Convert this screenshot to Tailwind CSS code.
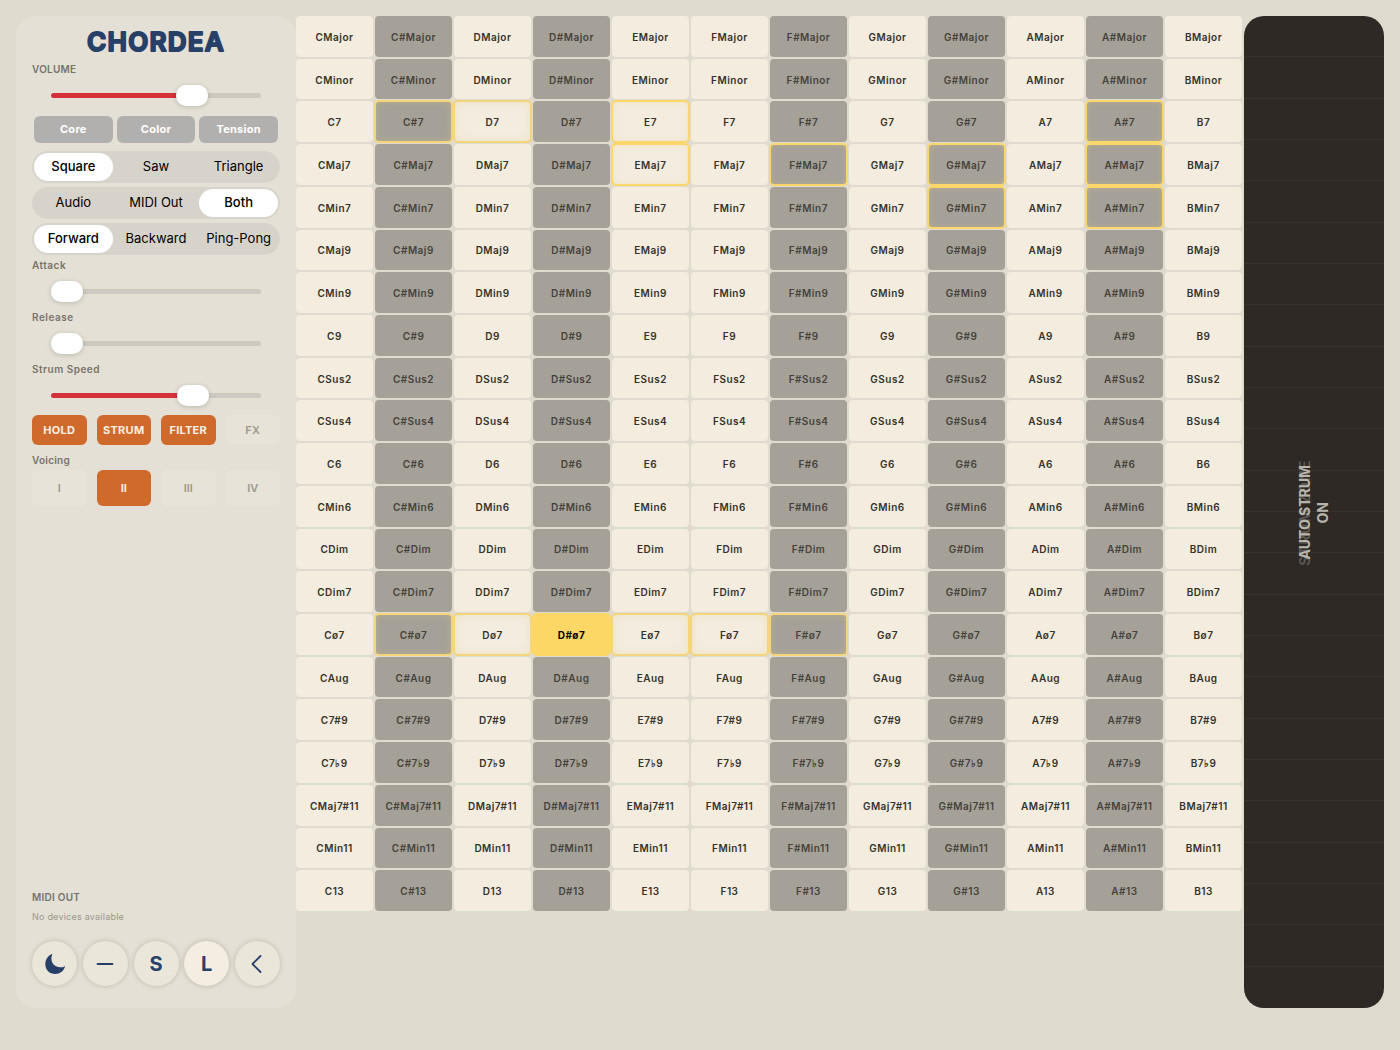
<!DOCTYPE html>
<html lang="en">
<head>
<meta charset="utf-8">
<meta name="viewport" content="width=device-width, initial-scale=1">
<title>Chordea</title>
<script src="https://cdn.jsdelivr.net/npm/@tailwindcss/browser@4"></script>
</head>
<body class="h-screen bg-[#dfdbcf] font-['Inter',sans-serif] text-[#35322b]">
<div class="flex h-full px-4 pt-4 pb-[42px]">

  <aside class="flex w-[280px] shrink-0 flex-col rounded-[20px] bg-[#e4e0d5] px-4 pt-2 pb-[22px]">
    <h1 class="flex h-9 justify-center">
      <svg class="h-9 w-full overflow-visible" role="img" aria-label="Chordea"><text x="50%" y="27" text-anchor="middle" class="fill-[#274068] stroke-[#274068] stroke-[2px] text-[26px] font-semibold tracking-wider [stroke-linejoin:round]">CHORDEA</text></svg>
    </h1>

    <label for="volume" class="mt-px h-4 text-[10px] leading-4 font-semibold tracking-wide text-[#77736b]">VOLUME</label>
    <div class="flex h-9 items-center px-[19px]"><input id="volume" type="range" value="70" style="--v:70%" class="slider"></div>

    <div class="mt-[3px] grid grid-cols-3 gap-1 px-0.5">
      <button class="h-[27px] rounded-md bg-[#b2b0ae] text-[11px] font-bold tracking-wide text-white">Core</button>
      <button class="h-[27px] rounded-md bg-[#b2b0ae] text-[11px] font-bold tracking-wide text-white">Color</button>
      <button class="h-[27px] rounded-md bg-[#b2b0ae] text-[11px] font-bold tracking-wide text-white">Tension</button>
    </div>

    <div id="segments" class="mt-2 flex flex-col gap-1"></div>

    <label for="attack" class="mt-0.5 h-4 text-[10px] leading-4 font-semibold tracking-wider text-[#77736b]">Attack</label>
    <div class="flex h-9 items-center px-[19px]"><input id="attack" type="range" value="0" style="--v:0%" class="slider"></div>
    <label for="release" class="h-4 text-[10px] leading-4 font-semibold tracking-wider text-[#77736b]">Release</label>
    <div class="flex h-9 items-center px-[19px]"><input id="release" type="range" value="0" style="--v:0%" class="slider"></div>
    <label for="speed" class="h-4 text-[10px] leading-4 font-semibold tracking-wider text-[#77736b]">Strum Speed</label>
    <div class="flex h-9 items-center px-[19px]"><input id="speed" type="range" value="71" style="--v:71%" class="slider"></div>

    <div class="mt-0.5 grid grid-cols-4 gap-2.5">
      <button class="h-[30px] rounded-md bg-[#d06a2c] text-[11px] font-bold tracking-wide text-[#f8f0e4]">HOLD</button>
      <button class="h-[30px] rounded-md bg-[#d06a2c] text-[11px] font-bold tracking-wide text-[#f8f0e4]">STRUM</button>
      <button class="h-[30px] rounded-md bg-[#d06a2c] text-[11px] font-bold tracking-wide text-[#f8f0e4]">FILTER</button>
      <button class="h-[30px] rounded-md bg-[#e7e3d8] text-[11px] font-semibold tracking-wide text-[#9c988e]">FX</button>
    </div>

    <h2 class="mt-[7px] h-4 text-[10px] leading-4 font-semibold tracking-wide text-[#77736b]">Voicing</h2>
    <div class="mt-0.5 grid grid-cols-4 gap-2.5">
      <button class="h-9 rounded-md bg-[#e7e3d8] text-[11px] font-semibold text-[#9c988e]">I</button>
      <button class="h-9 rounded-md bg-[#d06a2c] text-[11px] font-bold text-[#f8f0e4]">II</button>
      <button class="h-9 rounded-md bg-[#e7e3d8] text-[11px] font-semibold text-[#9c988e]">III</button>
      <button class="h-9 rounded-md bg-[#e7e3d8] text-[11px] font-semibold text-[#9c988e]">IV</button>
    </div>

    <h2 class="mt-auto h-4 text-[10px] leading-4 font-semibold tracking-wide text-[#77736b]">MIDI OUT</h2>
    <p class="mt-1 h-4 text-[9px] leading-4 tracking-wide text-[#9b978d]">No devices available</p>

    <div class="mt-4 flex justify-between text-xl font-bold text-[#274068]">
      <button aria-label="Dark mode" class="flex size-[45px] items-center justify-center rounded-full bg-[#ebe6da] shadow-[0_0_5px_rgba(60,50,30,0.22)]">
        <svg class="size-5" viewBox="0 0 20 20" fill="currentColor"><path d="M7.3.3C6.700 1.600 6.400 3 6.400 4.500c0 5.200 3.700 8.700 8.900 8.700 1.500 0 3-.2 4.200-.8.3-.1.600.1.500.4C18.600 17.100 14.900 20 10.200 20 4.500 20 .3 15.800.3 10.200.3 5.500 3.100 1.600 6.900 0c.3-.1.500.1.400.3z"/></svg>
      </button>
      <button aria-label="Remove" class="flex size-[45px] items-center justify-center rounded-full bg-[#ebe6da] shadow-[0_0_5px_rgba(60,50,30,0.22)]">
        <svg class="size-5" viewBox="0 0 20 20" fill="none" stroke="currentColor" stroke-width="1.800" stroke-linecap="round"><path d="M2.500 10h15"/></svg>
      </button>
      <button class="size-[45px] rounded-full bg-[#ebe6da] shadow-[0_0_5px_rgba(60,50,30,0.22)]">S</button>
      <button class="size-[45px] rounded-full bg-[#f4ede1] shadow-[0_0_5px_rgba(60,50,30,0.26)]">L</button>
      <button aria-label="Collapse" class="flex size-[45px] items-center justify-center rounded-full bg-[#ebe6da] shadow-[0_0_5px_rgba(60,50,30,0.22)]">
        <svg class="size-5" viewBox="0 0 20 20" fill="none" stroke="currentColor" stroke-width="1.800" stroke-linecap="round" stroke-linejoin="round"><path d="M12.500 2 4.500 10l8 8"/></svg>
      </button>
    </div>
  </aside>

  <main class="min-w-0 flex-1 pb-[97px]">
    <div id="chords" class="grid h-full grid-cols-12 grid-rows-[repeat(21,minmax(0,1fr))] gap-0.5"></div>
  </main>

  <section id="strip" aria-label="Strum zone" class="relative ml-0.5 grid w-[140px] shrink-0 grid-rows-[repeat(24,minmax(0,1fr))] overflow-hidden rounded-[20px] bg-[#2e2925]">
    <div class="absolute inset-y-0 left-[52px] flex items-center">
      <span class="rotate-180 text-sm leading-[18px] font-semibold tracking-widest whitespace-nowrap text-[#5d5955] [writing-mode:vertical-rl]">STRUM ZONE</span>
    </div>
    <div class="absolute inset-0 flex items-center justify-center">
      <p class="rotate-180 text-center text-sm leading-[18px] font-bold text-[#b8b4ae] [writing-mode:vertical-rl]">AUTO STRUM<br>ON</p>
    </div>
  </section>
</div>

<script>
  const SLIDER = 'h-[21px] w-full appearance-none bg-transparent [&::-webkit-slider-runnable-track]:h-[5px] [&::-webkit-slider-runnable-track]:rounded-full [&::-webkit-slider-runnable-track]:bg-[linear-gradient(to_right,#d53138_var(--v),#cdc9c0_var(--v))] [&::-webkit-slider-thumb]:-mt-2 [&::-webkit-slider-thumb]:h-[21px] [&::-webkit-slider-thumb]:w-8 [&::-webkit-slider-thumb]:appearance-none [&::-webkit-slider-thumb]:rounded-[10px] [&::-webkit-slider-thumb]:bg-white [&::-webkit-slider-thumb]:shadow-[0_1px_5px_rgba(0,0,0,0.18)]';
  document.querySelectorAll('.slider').forEach(s => s.className = SLIDER);

  const segments = [[['Square', 'Saw', 'Triangle'], 0], [['Audio', 'MIDI Out', 'Both'], 2], [['Forward', 'Backward', 'Ping-Pong'], 0]];
  document.getElementById('segments').innerHTML = segments.map(([names, on]) =>
    '<div class="grid h-8 grid-cols-3 gap-1 rounded-full bg-[#d7d3ca] p-0.5 text-[13px] text-black">' +
    names.map((n, i) => `<button class="${i === on ? 'rounded-full bg-white font-medium whitespace-nowrap' : 'whitespace-nowrap'}">${n}</button>`).join('') +
    '</div>').join('');

  const roots = ['C', 'C#', 'D', 'D#', 'E', 'F', 'F#', 'G', 'G#', 'A', 'A#', 'B'];
  const kinds = ['Major', 'Minor', '7', 'Maj7', 'Min7', 'Maj9', 'Min9', '9', 'Sus2', 'Sus4', '6', 'Min6', 'Dim', 'Dim7', 'ø7', 'Aug', '7#9', '7♭9', 'Maj7#11', 'Min11', '13'];
  const strong = new Set(['A#7', 'A#Maj7', 'G#Maj7', 'G#Min7', 'A#Min7', 'E7', 'EMaj7', 'F#Maj7']);
  const soft = new Set(['C#7', 'D7', 'C#ø7', 'Dø7', 'Eø7', 'Fø7', 'F#ø7']);
  const BASE = 'rounded-sm pt-0.5 text-[10px] tracking-wider whitespace-nowrap ';
  const ACTIVE = 'bg-[#fdd766] font-bold text-black outline-2 -outline-offset-1 outline-[#fdd766]';
  const BLACK_KEY = 'bg-[#a5a199] font-semibold text-[#45413b] ';
  const WHITE_KEY = 'bg-[#f3ecdf] font-semibold text-[#35322b] ';
  const STRONG = 'outline-2 -outline-offset-1 outline-[#fad66b] shadow-[inset_0_0_7px_rgba(240,210,110,0.35)]';
  const SOFT = 'outline-2 -outline-offset-1 outline-[#f5d57b] shadow-[inset_0_0_8px_rgba(230,205,110,0.35)]';
  document.getElementById('chords').innerHTML = kinds.flatMap(k => roots.map(r => {
    const name = r + k;
    const key = name === 'D#ø7' ? ACTIVE : r.length > 1 ? BLACK_KEY : WHITE_KEY;
    const ring = strong.has(name) ? STRONG : soft.has(name) ? SOFT : '';
    return `<button class="${BASE + key + ring}">${name}</button>`;
  })).join('');

  document.getElementById('strip').insertAdjacentHTML('afterbegin',
    '<div class="border-b border-[#37322e]"></div>'.repeat(23));
</script>
</body>
</html>
